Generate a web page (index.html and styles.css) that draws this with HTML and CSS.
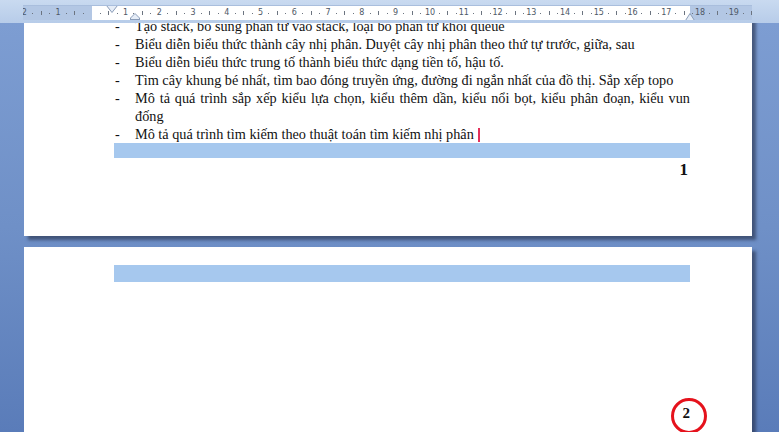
FILE: index.html
```html
<!DOCTYPE html>
<html lang="vi">
<head>
<meta charset="utf-8">
<title>Document</title>
<link rel="stylesheet" href="styles.css">
</head>
<body>
<div class="app">
  <div class="header">
    <div class="ruler">
      <div class="ticks">
        <div class="cell"><span class="n">2</span><span class="d"><b></b></span><span class="t"><b></b></span><span class="d"><b></b></span></div>
        <div class="cell"><span class="n">1</span><span class="d"><b></b></span><span class="t"><b></b></span><span class="d"><b></b></span></div>
        <div class="cell"><span class="n"></span><span class="d"><b></b></span><span class="t"><b></b></span><span class="d"><b></b></span></div>
        <div class="cell"><span class="n">1</span><span class="d"><b></b></span><span class="t"><b></b></span><span class="d"><b></b></span></div>
        <div class="cell"><span class="n">2</span><span class="d"><b></b></span><span class="t"><b></b></span><span class="d"><b></b></span></div>
        <div class="cell"><span class="n">3</span><span class="d"><b></b></span><span class="t"><b></b></span><span class="d"><b></b></span></div>
        <div class="cell"><span class="n">4</span><span class="d"><b></b></span><span class="t"><b></b></span><span class="d"><b></b></span></div>
        <div class="cell"><span class="n">5</span><span class="d"><b></b></span><span class="t"><b></b></span><span class="d"><b></b></span></div>
        <div class="cell"><span class="n">6</span><span class="d"><b></b></span><span class="t"><b></b></span><span class="d"><b></b></span></div>
        <div class="cell"><span class="n">7</span><span class="d"><b></b></span><span class="t"><b></b></span><span class="d"><b></b></span></div>
        <div class="cell"><span class="n">8</span><span class="d"><b></b></span><span class="t"><b></b></span><span class="d"><b></b></span></div>
        <div class="cell"><span class="n">9</span><span class="d"><b></b></span><span class="t"><b></b></span><span class="d"><b></b></span></div>
        <div class="cell"><span class="n">10</span><span class="d"><b></b></span><span class="t"><b></b></span><span class="d"><b></b></span></div>
        <div class="cell"><span class="n">11</span><span class="d"><b></b></span><span class="t"><b></b></span><span class="d"><b></b></span></div>
        <div class="cell"><span class="n">12</span><span class="d"><b></b></span><span class="t"><b></b></span><span class="d"><b></b></span></div>
        <div class="cell"><span class="n">13</span><span class="d"><b></b></span><span class="t"><b></b></span><span class="d"><b></b></span></div>
        <div class="cell"><span class="n">14</span><span class="d"><b></b></span><span class="t"><b></b></span><span class="d"><b></b></span></div>
        <div class="cell"><span class="n">15</span><span class="d"><b></b></span><span class="t"><b></b></span><span class="d"><b></b></span></div>
        <div class="cell"><span class="n">16</span><span class="d"><b></b></span><span class="t"><b></b></span><span class="d"><b></b></span></div>
        <div class="cell"><span class="n">17</span><span class="d"><b></b></span><span class="t"><b></b></span><span class="d"><b></b></span></div>
        <div class="cell"><span class="n">18</span><span class="d"><b></b></span><span class="t"><b></b></span><span class="d"><b></b></span></div>
        <div class="cell"><span class="n">19</span><span class="d"><b></b></span><span class="t"><b></b></span><span class="d"><b></b></span></div>
      </div>
      <svg class="marker m-first" width="12" height="8" viewBox="0 0 12 8"><path d="M0.5 0.5 H11.5 L6 7.5 Z" fill="#e6edf7" stroke="#8a9cb8"/></svg>
      <svg class="marker m-hang" width="10" height="11" viewBox="0 0 10 11"><path d="M5 0.5 L9.5 5 V10.5 H0.5 V5 Z" fill="#e6edf7" stroke="#8a9cb8"/><path d="M0.5 6.5 H9.5" stroke="#8a9cb8"/></svg>
      <svg class="marker m-right" width="10" height="8" viewBox="0 0 10 8"><path d="M5 0.5 L9.5 7.5 H0.5 Z" fill="#e6edf7" stroke="#8a9cb8"/></svg>
    </div>
  </div>
  <div class="docarea">
    <div class="page page1">
      <div class="item"><span class="dash">-</span><span class="txt">Tạo stack, bổ sung phần tử vào stack, loại bỏ phần tử khỏi queue</span></div>
      <div class="item"><span class="dash">-</span><span class="txt">Biểu diễn biểu thức thành cây nhị phân. Duyệt cây nhị phân theo thứ tự trước, giữa, sau</span></div>
      <div class="item"><span class="dash">-</span><span class="txt">Biểu diễn biểu thức trung tố thành biểu thức dạng tiền tố, hậu tố.</span></div>
      <div class="item"><span class="dash">-</span><span class="txt">Tìm cây khung bé nhất, tìm bao đóng truyền ứng, đường đi ngắn nhất của đồ thị. Sắp xếp topo</span></div>
      <div class="item"><span class="dash">-</span><span class="txt"><span class="full">Mô tả quá trình sắp xếp kiểu lựa chọn, kiểu thêm dần, kiểu nổi bọt, kiểu phân đoạn, kiểu vun</span><span class="rest">đống</span></span></div>
      <div class="item"><span class="dash">-</span><span class="txt">Mô tả quá trình tìm kiếm theo thuật toán tìm kiếm nhị phân <span class="caret"></span></span></div>
      <div class="bar bar1"></div>
      <div class="pnum">1</div>
    </div>
    <div class="page page2">
      <div class="bar bar2"></div>
      <div class="pnum pnum2"><span class="circled">2</span></div>
    </div>
  </div>
</div>
</body>
</html>
```

FILE: styles.css
```css
* { box-sizing: border-box; }
html, body { margin: 0; padding: 0; }
body { width: 779px; height: 432px; overflow: hidden; background: #6f90c6; }

.app { width: 779px; height: 432px; display: flex; flex-direction: column; overflow: hidden; }

.header {
  height: 23px;
  flex: 0 0 23px;
  background: linear-gradient(to bottom, #c9daf0, #b7cce9);
  padding: 5px 0 0 23px;
  position: relative;
  z-index: 2;
}

.ruler {
  position: relative;
  width: 729px;
  height: 15px;
  background: linear-gradient(to right, #b3c7e4 0 69px, #ffffff 69px 667px, #b3c7e4 667px);
  border-top: 1px solid #a9bedd;
  overflow: hidden;
}

.ticks {
  display: flex;
  margin-left: -3px;
  height: 14px;
  font-family: "DejaVu Sans", "Liberation Sans", sans-serif;
  font-size: 8px;
  color: #4e5866;
}

.cell { flex: 0 0 33.75px; display: flex; height: 14px; }
.cell > span { flex: 0 0 25%; display: flex; align-items: center; justify-content: center; }
.n { line-height: 14px; }
.d b { display: block; width: 1px; height: 1px; background: #6c7480; }
.t b { display: block; width: 1px; height: 4px; background: #6c7480; }

.marker { position: absolute; }
.m-first { left: 83px; top: -1px; }
.m-hang { left: 107px; top: 7px; }
.m-right { left: 662px; top: 7px; }

.docarea {
  flex: 1;
  overflow: hidden;
  background: linear-gradient(to bottom, #7d9dd2 0%, #6f90c7 50%, #5a7cb9 100%);
  padding-left: 24px;
}

.page {
  width: 728px;
  background: #ffffff;
  box-shadow: 4px 4px 3px rgba(35, 45, 70, 0.6);
  font-family: "Liberation Serif", "Times New Roman", serif;
  color: #111;
  padding: 0 62px 0 90px;
}

.page1 { margin-top: -6px; padding-bottom: 58px; }
.page2 { margin-top: 11px; padding-top: 18px; height: 200px; }

.item { display: flex; font-size: 14.25px; line-height: 18px; }
.dash { flex: 0 0 21px; padding-left: 1px; }
.txt { flex: 1; text-align: justify; }
.full { display: block; text-align: justify; text-align-last: justify; }
.rest { display: block; }

.caret {
  display: inline-block;
  width: 2px;
  height: 14px;
  background: #e3305a;
  vertical-align: -3px;
  margin-left: 1px;
}

.bar { background: #a6c8ee; }
.bar1 { margin-top: 0; height: 15px; }
.bar2 { height: 17px; }

.pnum {
  text-align: right;
  font-weight: bold;
  font-size: 17px;
  line-height: 16px;
  margin-top: 4px;
  padding-right: 2px;
}

.pnum2 { margin-top: 123px; font-size: 15px; padding-right: 0; }
.circled { position: relative; display: inline-block; }
.circled::after {
  content: "";
  position: absolute;
  left: 50%;
  top: 50%;
  width: 30px;
  height: 30px;
  margin: -15px 0 0 -15px;
  border: 3.5px solid #e5121c;
  border-radius: 50%;
}
```
